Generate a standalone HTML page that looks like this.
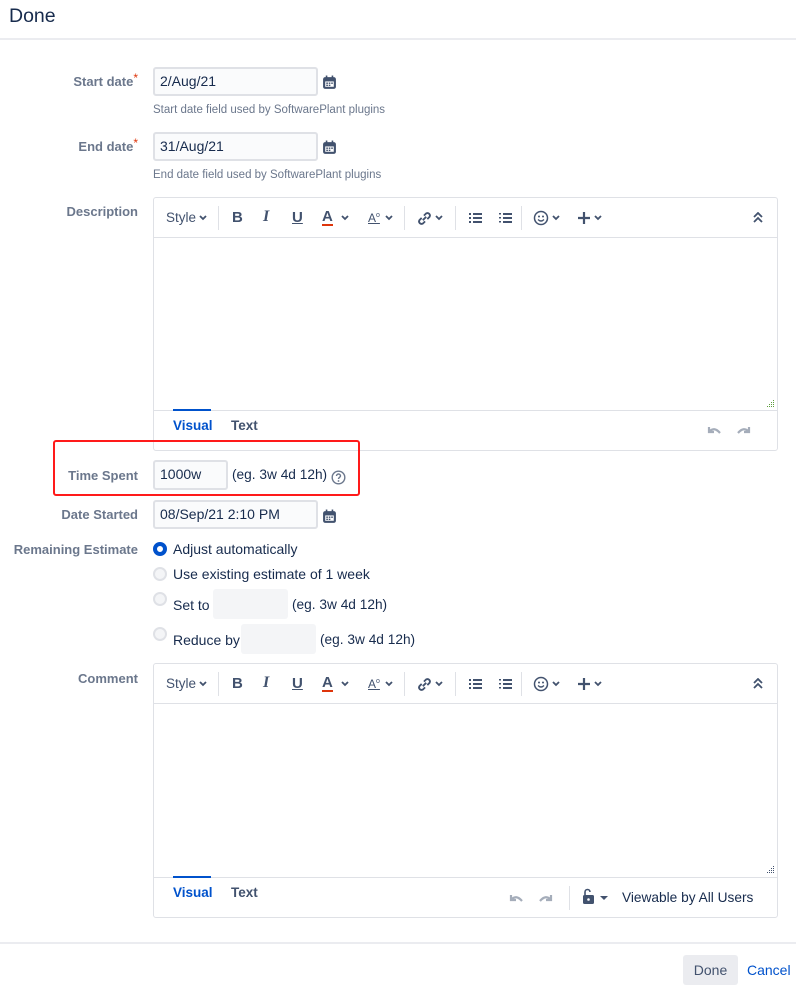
<!DOCTYPE html>
<html><head><meta charset="utf-8"><style>
*{box-sizing:border-box;margin:0;padding:0}
body{width:796px;height:982px;background:#fff;font-family:"Liberation Sans",sans-serif;color:#172b4d;position:relative;overflow:hidden;font-size:14px}
.a{position:absolute}
.lbl{position:absolute;right:658px;font-weight:bold;color:#6b778c;font-size:13px;white-space:nowrap;line-height:16px}
.req{color:#de350b;font-weight:normal;font-size:12px;position:relative;top:-4px}
.inp{position:absolute;border:2px solid #dfe1e6;background:#fafbfc;border-radius:3px;padding-left:5px;line-height:25px;font-size:14px}
.emp{position:absolute;background:#f4f5f7;border-radius:3px}
.help{position:absolute;left:153px;font-size:11.5px;color:#6b778c}
.ed{position:absolute;left:153px;width:625px;border:1px solid #dfe1e6;border-radius:3px}
.tb{position:absolute;left:0;top:0;width:100%;height:40px;border-bottom:1px solid #dfe1e6}
.tb span,.tb svg{position:absolute}
.sep{position:absolute;top:8px;width:1px;height:24px;background:#dfe1e6}
.ic{color:#42526e;font-weight:bold;font-size:15px;top:11px}
.tabs{position:absolute;left:0;width:100%;border-top:1px solid #dfe1e6}
.tab{position:absolute;font-weight:bold;font-size:13.5px;color:#42526e}
.radio{position:absolute;left:153px;width:14px;height:14px;border-radius:50%;border:2px solid #dfe1e6;background:#f4f5f7}
</style></head><body>
<div class="a" style="left:9px;top:5px;font-size:19.5px;color:#172b4d">Done</div>
<div class="a" style="left:0;top:38px;width:796px;height:2px;background:#ebecf0"></div>

<div class="lbl" style="top:74px">Start date<span class="req">*</span></div>
<div class="inp" style="left:153px;top:67px;width:165px;height:29px">2/Aug/21</div>
<svg class="a" style="left:322px;top:75px" width="15" height="15" viewBox="0 0 14 14"><rect x="1" y="2" width="12" height="11" rx="2" fill="#42526e"/><rect x="3" y="6" width="8" height="5" fill="#fff"/><g fill="#42526e"><rect x="4" y="7" width="1.5" height="1.3"/><rect x="6.3" y="7" width="1.5" height="1.3"/><rect x="8.6" y="7" width="1.5" height="1.3"/><rect x="4" y="9" width="1.5" height="1.3"/><rect x="6.3" y="9" width="1.5" height="1.3"/></g><rect x="3.5" y="0.5" width="1.5" height="3" fill="#42526e"/><rect x="9" y="0.5" width="1.5" height="3" fill="#42526e"/></svg>
<div class="help" style="top:104px">Start date field used by SoftwarePlant plugins</div>

<div class="lbl" style="top:139px">End date<span class="req">*</span></div>
<div class="inp" style="left:153px;top:132px;width:165px;height:29px">31/Aug/21</div>
<svg class="a" style="left:322px;top:140px" width="15" height="15" viewBox="0 0 14 14"><rect x="1" y="2" width="12" height="11" rx="2" fill="#42526e"/><rect x="3" y="6" width="8" height="5" fill="#fff"/><g fill="#42526e"><rect x="4" y="7" width="1.5" height="1.3"/><rect x="6.3" y="7" width="1.5" height="1.3"/><rect x="8.6" y="7" width="1.5" height="1.3"/><rect x="4" y="9" width="1.5" height="1.3"/><rect x="6.3" y="9" width="1.5" height="1.3"/></g><rect x="3.5" y="0.5" width="1.5" height="3" fill="#42526e"/><rect x="9" y="0.5" width="1.5" height="3" fill="#42526e"/></svg>
<div class="help" style="top:169px">End date field used by SoftwarePlant plugins</div>

<div class="lbl" style="top:204px">Description</div>
<div class="ed" style="top:197px;height:254px">
 <div class="tb">
  <span style="left:12px;top:12px;font-size:13.5px;color:#42526e">Style</span>
  <svg style="left:45px;top:17px" width="8" height="6" viewBox="0 0 8 6"><path d="M1 1l3 3 3-3" stroke="#42526e" stroke-width="1.8" fill="none"/></svg>
  <div class="sep" style="left:64px"></div>
  <span class="ic" style="left:78px">B</span>
  <span class="ic" style="left:109px;font-style:italic;font-family:'Liberation Serif',serif;font-size:16px;top:10px">I</span>
  <span class="ic" style="left:138px;text-decoration:underline">U</span>
  <span class="ic" style="left:168px;border-bottom:2px solid #de350b;line-height:15px">A</span>
  <svg style="left:187px;top:17px" width="8" height="6" viewBox="0 0 8 6"><path d="M1 1l3 3 3-3" stroke="#42526e" stroke-width="1.8" fill="none"/></svg>
  <span class="ic" style="left:214px;font-size:12px;top:13px;font-weight:normal;text-decoration:underline">A<sup style="font-size:7px">o</sup></span>
  <svg style="left:231px;top:17px" width="8" height="6" viewBox="0 0 8 6"><path d="M1 1l3 3 3-3" stroke="#42526e" stroke-width="1.8" fill="none"/></svg>
  <div class="sep" style="left:250px"></div>
  <svg style="left:262px;top:12px" width="17" height="17" viewBox="0 0 15 15"><path d="M6 9l3-3M5 7L3 9a2.2 2.2 0 003 3l2-2M10 8l2-2a2.2 2.2 0 00-3-3L7 5" stroke="#42526e" stroke-width="1.6" fill="none"/></svg>
  <svg style="left:281px;top:17px" width="8" height="6" viewBox="0 0 8 6"><path d="M1 1l3 3 3-3" stroke="#42526e" stroke-width="1.8" fill="none"/></svg>
  <div class="sep" style="left:301px"></div>
  <svg style="left:315px;top:14px" width="13" height="12" viewBox="0 0 13 12"><g fill="#42526e"><rect x="0" y="1" width="2" height="2"/><rect x="0" y="5" width="2" height="2"/><rect x="0" y="9" width="2" height="2"/><rect x="4" y="1" width="9" height="2"/><rect x="4" y="5" width="9" height="2"/><rect x="4" y="9" width="9" height="2"/></g></svg>
  <svg style="left:345px;top:14px" width="13" height="12" viewBox="0 0 13 12"><g fill="#42526e"><rect x="0" y="1" width="2" height="1.5"/><rect x="0" y="5" width="2" height="1.5"/><rect x="0" y="9" width="2" height="1.5"/><rect x="4" y="1" width="9" height="2"/><rect x="4" y="5" width="9" height="2"/><rect x="4" y="9" width="9" height="2"/></g></svg>
  <div class="sep" style="left:367px"></div>
  <svg style="left:379px;top:12px" width="16" height="16" viewBox="0 0 16 16"><circle cx="8" cy="8" r="6.5" stroke="#42526e" stroke-width="1.5" fill="none"/><circle cx="6" cy="6.5" r="1" fill="#42526e"/><circle cx="10" cy="6.5" r="1" fill="#42526e"/><path d="M5 9.5q3 3 6 0" stroke="#42526e" stroke-width="1.3" fill="none"/></svg>
  <svg style="left:398px;top:17px" width="8" height="6" viewBox="0 0 8 6"><path d="M1 1l3 3 3-3" stroke="#42526e" stroke-width="1.8" fill="none"/></svg>
  <svg style="left:423px;top:13px" width="14" height="14" viewBox="0 0 14 14"><path d="M7 1v12M1 7h12" stroke="#42526e" stroke-width="2.2"/></svg>
  <svg style="left:440px;top:17px" width="8" height="6" viewBox="0 0 8 6"><path d="M1 1l3 3 3-3" stroke="#42526e" stroke-width="1.8" fill="none"/></svg>
  <svg style="left:599px;top:14px" width="10" height="12" viewBox="0 0 10 12"><path d="M1 5l4-4 4 4M1 10l4-4 4 4" stroke="#42526e" stroke-width="1.8" fill="none"/></svg>
 </div>
 <svg class="a" style="left:611px;top:200px" width="10" height="10"><g fill="#5e9e3e"><rect x="8" y="2" width="1" height="1"/><rect x="6" y="4" width="1" height="1"/><rect x="8" y="4" width="1" height="1"/><rect x="4" y="6" width="1" height="1"/><rect x="6" y="6" width="1" height="1"/><rect x="8" y="6" width="1" height="1"/><rect x="2" y="8" width="1" height="1"/><rect x="4" y="8" width="1" height="1"/><rect x="6" y="8" width="1" height="1"/><rect x="8" y="8" width="1" height="1"/></g></svg>
 <div class="tabs" style="top:212px;height:41px">
  <div class="a" style="left:19px;top:-2px;width:38px;height:2px;background:#0052cc"></div>
  <span class="tab" style="left:19px;top:7px;color:#0052cc">Visual</span>
  <span class="tab" style="left:77px;top:7px">Text</span>
  <svg class="a" style="left:552px;top:15px" width="16" height="10" viewBox="0 0 16 10"><path d="M3 1v5h5M3 6q5-6 11 1" stroke="#a5adba" stroke-width="2.2" fill="none"/></svg>
  <svg class="a" style="left:582px;top:15px" width="16" height="10" viewBox="0 0 16 10"><path d="M13 1v5H8M13 6Q8 0 2 7" stroke="#a5adba" stroke-width="2.2" fill="none"/></svg>
 </div>
</div>

<div class="a" style="left:53px;top:440px;width:307px;height:56px;border:2px solid #ff1a1a;border-radius:3px"></div>
<div class="lbl" style="top:468px">Time Spent</div>
<div class="inp" style="left:153px;top:460px;width:75px;height:30px">1000w</div>
<div class="a" style="left:232px;top:467px;font-size:13.7px">(eg. 3w 4d 12h)</div>
<svg class="a" style="left:331px;top:470px" width="15" height="15" viewBox="0 0 15 15"><circle cx="7.5" cy="7.5" r="6.3" stroke="#6b778c" stroke-width="1.4" fill="none"/><path d="M5.5 6a2 2 0 114 0c0 1.2-2 1.4-2 3" stroke="#6b778c" stroke-width="1.4" fill="none"/><circle cx="7.5" cy="11" r="0.9" fill="#6b778c"/></svg>

<div class="lbl" style="top:507px">Date Started</div>
<div class="inp" style="left:153px;top:500px;width:165px;height:29px">08/Sep/21 2:10 PM</div>
<svg class="a" style="left:322px;top:509px" width="15" height="15" viewBox="0 0 14 14"><rect x="1" y="2" width="12" height="11" rx="2" fill="#42526e"/><rect x="3" y="6" width="8" height="5" fill="#fff"/><g fill="#42526e"><rect x="4" y="7" width="1.5" height="1.3"/><rect x="6.3" y="7" width="1.5" height="1.3"/><rect x="8.6" y="7" width="1.5" height="1.3"/><rect x="4" y="9" width="1.5" height="1.3"/><rect x="6.3" y="9" width="1.5" height="1.3"/></g><rect x="3.5" y="0.5" width="1.5" height="3" fill="#42526e"/><rect x="9" y="0.5" width="1.5" height="3" fill="#42526e"/></svg>

<div class="lbl" style="top:542px">Remaining Estimate</div>
<div class="radio" style="top:542px;border:4px solid #0052cc;background:#fff"></div>
<div class="a" style="left:173px;top:541px">Adjust automatically</div>
<div class="radio" style="top:567px"></div>
<div class="a" style="left:173px;top:566px">Use existing estimate of 1 week</div>
<div class="radio" style="top:592px"></div>
<div class="a" style="left:173px;top:597px">Set to</div>
<div class="emp" style="left:213px;top:589px;width:75px;height:30px"></div>
<div class="a" style="left:292px;top:597px;font-size:13.7px">(eg. 3w 4d 12h)</div>
<div class="radio" style="top:627px"></div>
<div class="a" style="left:173px;top:632px">Reduce by</div>
<div class="emp" style="left:241px;top:624px;width:75px;height:30px"></div>
<div class="a" style="left:320px;top:632px;font-size:13.7px">(eg. 3w 4d 12h)</div>

<div class="lbl" style="top:671px">Comment</div>
<div class="ed" style="top:663px;height:255px">
 <div class="tb">
  <span style="left:12px;top:12px;font-size:13.5px;color:#42526e">Style</span>
  <svg style="left:45px;top:17px" width="8" height="6" viewBox="0 0 8 6"><path d="M1 1l3 3 3-3" stroke="#42526e" stroke-width="1.8" fill="none"/></svg>
  <div class="sep" style="left:64px"></div>
  <span class="ic" style="left:78px">B</span>
  <span class="ic" style="left:109px;font-style:italic;font-family:'Liberation Serif',serif;font-size:16px;top:10px">I</span>
  <span class="ic" style="left:138px;text-decoration:underline">U</span>
  <span class="ic" style="left:168px;border-bottom:2px solid #de350b;line-height:15px">A</span>
  <svg style="left:187px;top:17px" width="8" height="6" viewBox="0 0 8 6"><path d="M1 1l3 3 3-3" stroke="#42526e" stroke-width="1.8" fill="none"/></svg>
  <span class="ic" style="left:214px;font-size:12px;top:13px;font-weight:normal;text-decoration:underline">A<sup style="font-size:7px">o</sup></span>
  <svg style="left:231px;top:17px" width="8" height="6" viewBox="0 0 8 6"><path d="M1 1l3 3 3-3" stroke="#42526e" stroke-width="1.8" fill="none"/></svg>
  <div class="sep" style="left:250px"></div>
  <svg style="left:262px;top:12px" width="17" height="17" viewBox="0 0 15 15"><path d="M6 9l3-3M5 7L3 9a2.2 2.2 0 003 3l2-2M10 8l2-2a2.2 2.2 0 00-3-3L7 5" stroke="#42526e" stroke-width="1.6" fill="none"/></svg>
  <svg style="left:281px;top:17px" width="8" height="6" viewBox="0 0 8 6"><path d="M1 1l3 3 3-3" stroke="#42526e" stroke-width="1.8" fill="none"/></svg>
  <div class="sep" style="left:301px"></div>
  <svg style="left:315px;top:14px" width="13" height="12" viewBox="0 0 13 12"><g fill="#42526e"><rect x="0" y="1" width="2" height="2"/><rect x="0" y="5" width="2" height="2"/><rect x="0" y="9" width="2" height="2"/><rect x="4" y="1" width="9" height="2"/><rect x="4" y="5" width="9" height="2"/><rect x="4" y="9" width="9" height="2"/></g></svg>
  <svg style="left:345px;top:14px" width="13" height="12" viewBox="0 0 13 12"><g fill="#42526e"><rect x="0" y="1" width="2" height="1.5"/><rect x="0" y="5" width="2" height="1.5"/><rect x="0" y="9" width="2" height="1.5"/><rect x="4" y="1" width="9" height="2"/><rect x="4" y="5" width="9" height="2"/><rect x="4" y="9" width="9" height="2"/></g></svg>
  <div class="sep" style="left:367px"></div>
  <svg style="left:379px;top:12px" width="16" height="16" viewBox="0 0 16 16"><circle cx="8" cy="8" r="6.5" stroke="#42526e" stroke-width="1.5" fill="none"/><circle cx="6" cy="6.5" r="1" fill="#42526e"/><circle cx="10" cy="6.5" r="1" fill="#42526e"/><path d="M5 9.5q3 3 6 0" stroke="#42526e" stroke-width="1.3" fill="none"/></svg>
  <svg style="left:398px;top:17px" width="8" height="6" viewBox="0 0 8 6"><path d="M1 1l3 3 3-3" stroke="#42526e" stroke-width="1.8" fill="none"/></svg>
  <svg style="left:423px;top:13px" width="14" height="14" viewBox="0 0 14 14"><path d="M7 1v12M1 7h12" stroke="#42526e" stroke-width="2.2"/></svg>
  <svg style="left:440px;top:17px" width="8" height="6" viewBox="0 0 8 6"><path d="M1 1l3 3 3-3" stroke="#42526e" stroke-width="1.8" fill="none"/></svg>
  <svg style="left:599px;top:14px" width="10" height="12" viewBox="0 0 10 12"><path d="M1 5l4-4 4 4M1 10l4-4 4 4" stroke="#42526e" stroke-width="1.8" fill="none"/></svg>
 </div>
 <svg class="a" style="left:611px;top:200px" width="10" height="10"><g fill="#42526e"><rect x="8" y="2" width="1" height="1"/><rect x="6" y="4" width="1" height="1"/><rect x="8" y="4" width="1" height="1"/><rect x="4" y="6" width="1" height="1"/><rect x="6" y="6" width="1" height="1"/><rect x="8" y="6" width="1" height="1"/><rect x="2" y="8" width="1" height="1"/><rect x="4" y="8" width="1" height="1"/><rect x="6" y="8" width="1" height="1"/><rect x="8" y="8" width="1" height="1"/></g></svg>
 <div class="tabs" style="top:213px;height:41px">
  <div class="a" style="left:19px;top:-2px;width:38px;height:2px;background:#0052cc"></div>
  <span class="tab" style="left:19px;top:7px;color:#0052cc">Visual</span>
  <span class="tab" style="left:77px;top:7px">Text</span>
  <svg class="a" style="left:354px;top:16px" width="16" height="10" viewBox="0 0 16 10"><path d="M3 1v5h5M3 6q5-6 11 1" stroke="#a5adba" stroke-width="2.2" fill="none"/></svg>
  <svg class="a" style="left:384px;top:16px" width="16" height="10" viewBox="0 0 16 10"><path d="M13 1v5H8M13 6Q8 0 2 7" stroke="#a5adba" stroke-width="2.2" fill="none"/></svg>
  <div class="sep" style="left:415px;top:8px"></div>
  <svg class="a" style="left:428px;top:10px" width="14" height="17" viewBox="0 0 14 17"><path d="M3 7V4a2.5 2.5 0 015 0" stroke="#42526e" stroke-width="1.6" fill="none"/><rect x="1" y="7" width="11" height="9" rx="1.5" fill="#42526e"/><circle cx="6.5" cy="11.5" r="1.3" fill="#fff"/></svg>
  <svg class="a" style="left:446px;top:18px" width="8" height="5"><path d="M0 0h8L4 4z" fill="#42526e"/></svg>
  <span class="a" style="left:468px;top:12px;font-size:13.7px">Viewable by All Users</span>
 </div>
</div>

<div class="a" style="left:0;top:942px;width:796px;height:2px;background:#ebecf0"></div>
<div class="a" style="left:683px;top:955px;width:55px;height:30px;background:#ebecf0;border-radius:3px;text-align:center;line-height:30px;color:#42526e">Done</div>
<div class="a" style="left:747px;top:962px;color:#0052cc">Cancel</div>
</body></html>
